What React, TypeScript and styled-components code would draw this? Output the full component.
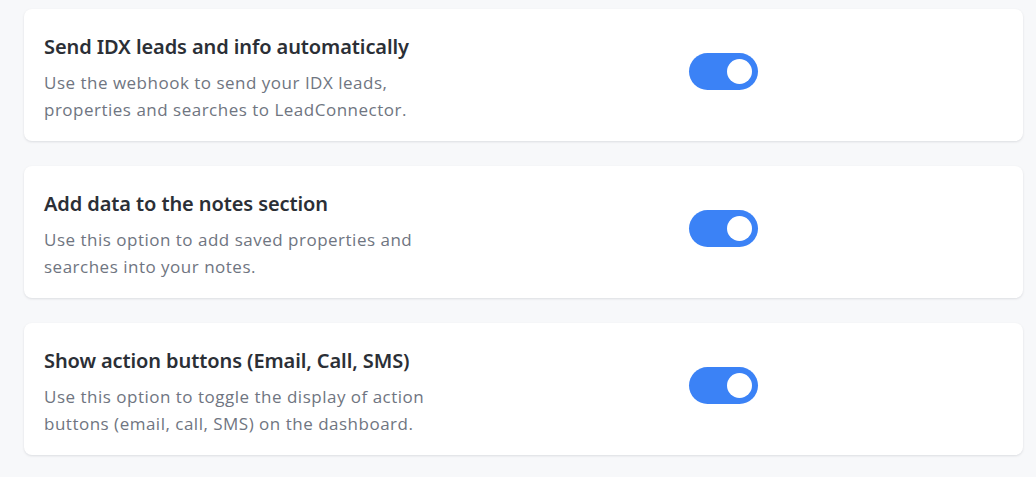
import React, { useState } from "react";
import styled, { createGlobalStyle } from "styled-components";

const Global = createGlobalStyle`
  html, body { margin: 0; padding: 0; background: #f7f8fa; }
  * { box-sizing: border-box; }
`;

const Page = styled.div`
  display: flex;
  flex-direction: column;
  gap: 25px;
  padding: 9px 13px 21px 24px;
  background: #f7f8fa;
  min-height: 477px;
`;

const Card = styled.div`
  display: flex;
  align-items: flex-start;
  height: 132px;
  padding: 24px 20px 0 20px;
  background: #ffffff;
  border-radius: 8px;
  box-shadow: 0 1px 3px rgba(16, 24, 40, 0.08), 0 1px 2px rgba(16, 24, 40, 0.04);
`;

const TextBlock = styled.div`
  flex: 0 0 645px;
  display: flex;
  flex-direction: column;
`;

const Title = styled.h3`
  margin: 0;
  font-family: "Noto Sans", "Open Sans", sans-serif;
  font-weight: 600;
  font-size: 20px;
  line-height: 28px;
  color: #2b2f36;
  letter-spacing: -0.1px;
`;

const Desc = styled.p`
  margin: 8px 0 0;
  max-width: 400px;
  font-family: "Open Sans", "Noto Sans", sans-serif;
  font-weight: 400;
  font-size: 17px;
  line-height: 27px;
  letter-spacing: 0.5px;
  color: #6f7581;
`;

const Toggle = styled.button<{ $on: boolean }>`
  position: relative;
  margin-top: 20px;
  flex: 0 0 auto;
  width: 69px;
  height: 37px;
  border: none;
  padding: 0;
  border-radius: 999px;
  background: ${(p) => (p.$on ? "#3b82f6" : "#d1d5db")};
  cursor: pointer;
`;

const Knob = styled.span<{ $on: boolean }>`
  position: absolute;
  top: 6px;
  left: ${(p) => (p.$on ? "38px" : "6px")};
  width: 25px;
  height: 25px;
  border-radius: 50%;
  background: #ffffff;
`;

const items = [
  {
    title: "Send IDX leads and info automatically",
    desc: "Use the webhook to send your IDX leads, properties and searches to LeadConnector.",
  },
  {
    title: "Add data to the notes section",
    desc: "Use this option to add saved properties and searches into your notes.",
  },
  {
    title: "Show action buttons (Email, Call, SMS)",
    desc: "Use this option to toggle the display of action buttons (email, call, SMS) on the dashboard.",
  },
];

export default function App() {
  const [state, setState] = useState([true, true, true]);
  return (
    <>
      <Global />
      <Page>
        {items.map((it, i) => (
          <Card key={i}>
            <TextBlock>
              <Title>{it.title}</Title>
              <Desc>{it.desc}</Desc>
            </TextBlock>
            <Toggle
              $on={state[i]}
              aria-pressed={state[i]}
              onClick={() => setState((s) => s.map((v, j) => (j === i ? !v : v)))}
            >
              <Knob $on={state[i]} />
            </Toggle>
          </Card>
        ))}
      </Page>
    </>
  );
}
